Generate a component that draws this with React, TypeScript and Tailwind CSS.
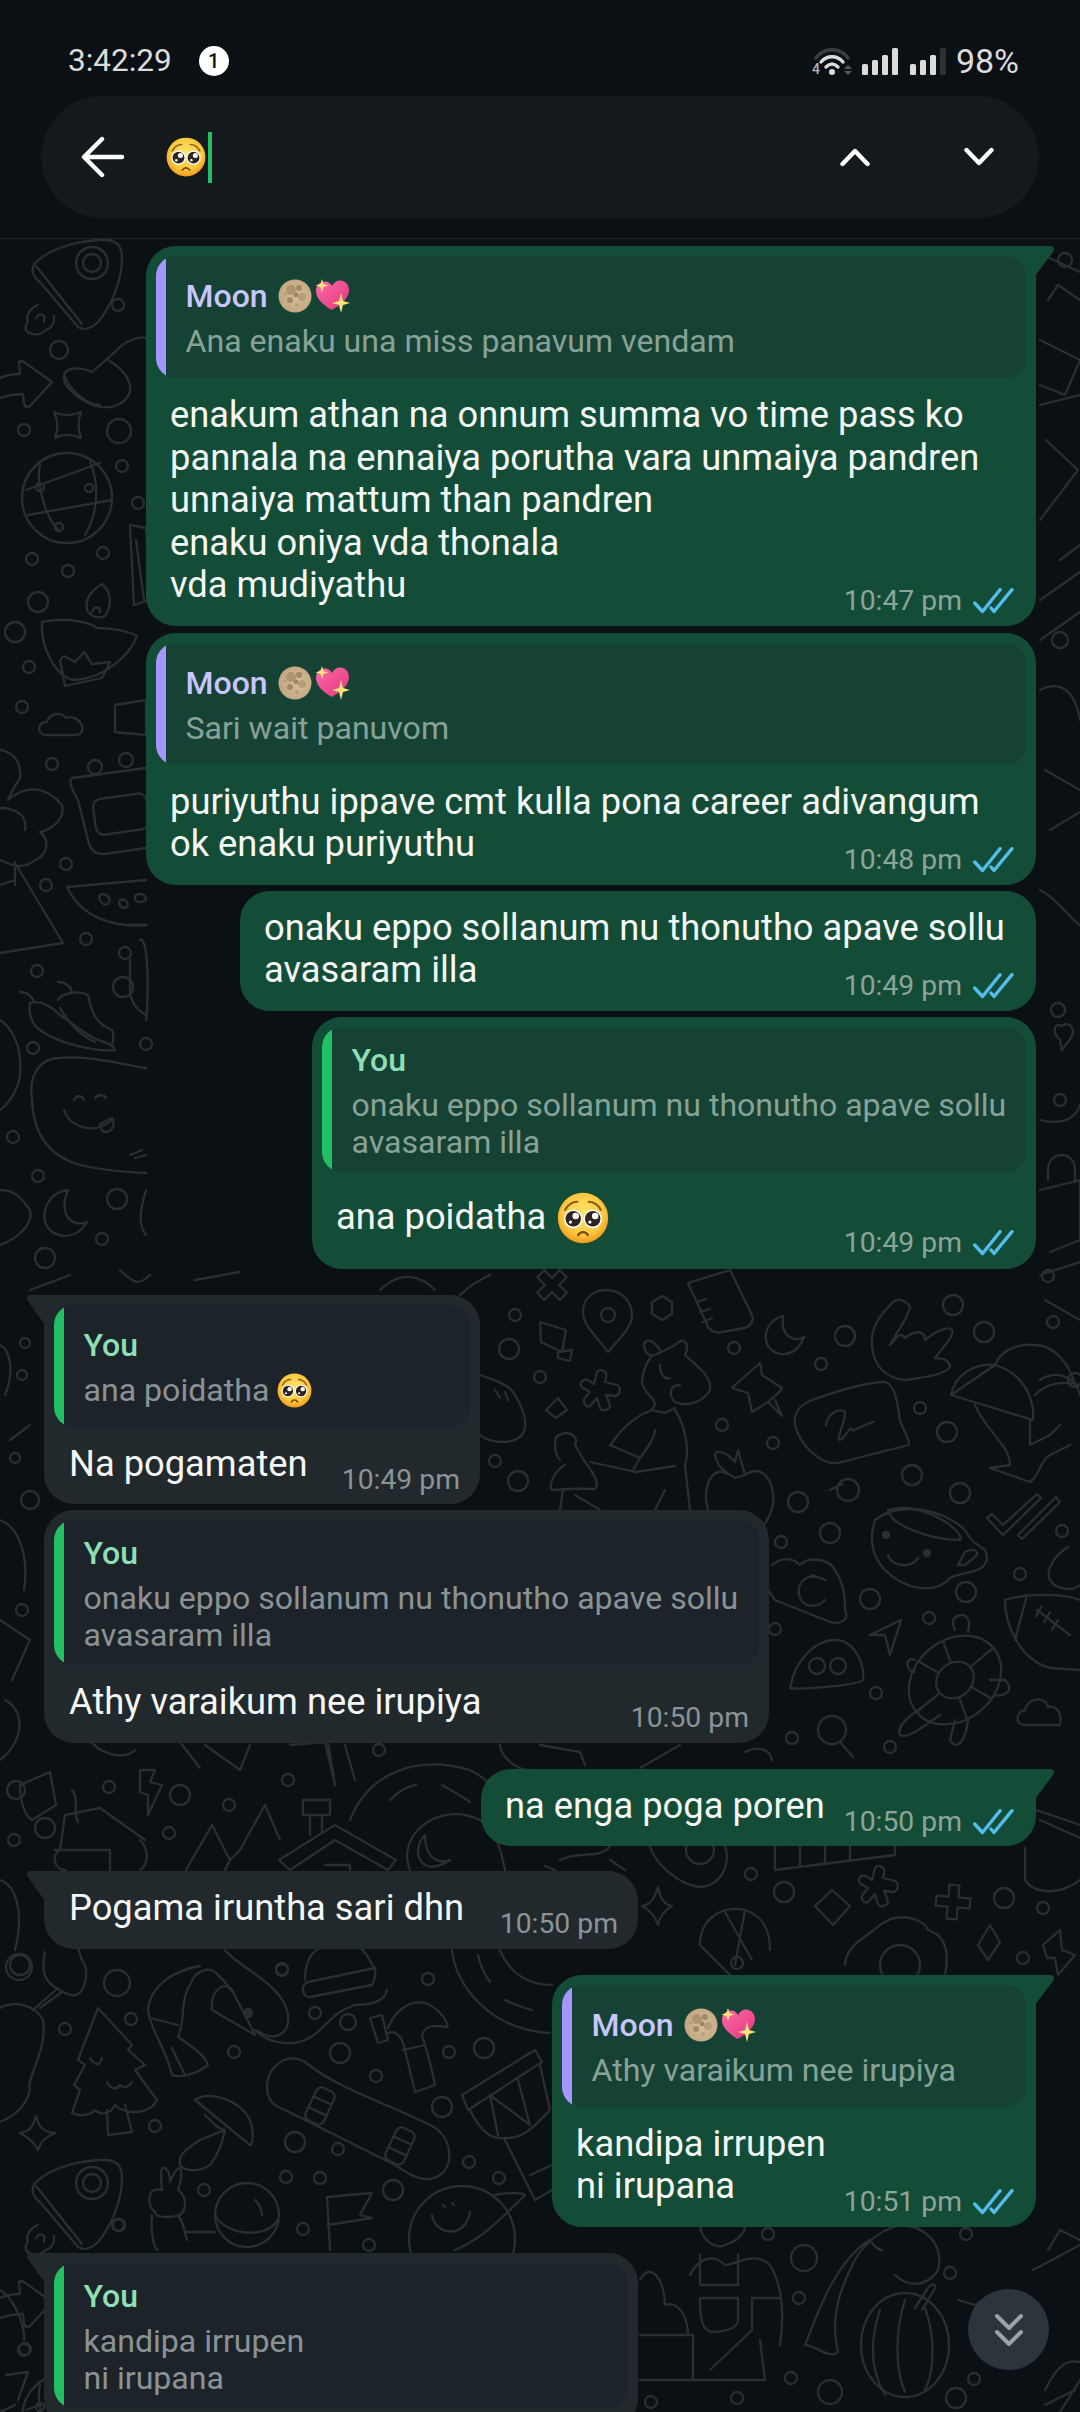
import React, { useId } from "react";

const paths: string[] = [
  "M36 262 C30 268 32 276 40 282 L78 327 C84 331 92 328 98 322 C112 305 122 280 122 258 C122 245 115 240 105 240 C85 240 55 245 36 262Z M36 266 L82 324",
  "M38 305 C30 308 25 316 28 322 C24 326 25 332 30 333 C34 336 42 334 46 330 C52 328 55 322 54 316 M36 318 C40 312 46 314 44 322",
  "M0 378 C6 375 12 374 20 374 L19 362 C19 361 22 361 24 362 L52 382 L30 406 C27 408 24 406 24 403 L23 394 C15 394 6 396 0 398",
  "M64 375 C66 368 78 366 92 372 L115 352 C125 340 140 336 146 338 M64 375 C62 385 75 398 95 406 C110 410 125 405 130 392 C132 380 122 368 108 360 M64 375 C72 395 90 405 100 405",
  "M54 412 C62 416 72 416 81 412 C78 420 78 430 81 438 C72 434 62 434 55 438 C58 430 58 420 54 412Z",
  "M26 490 L100 463 M28 515 L112 500 M40 465 C36 480 44 515 58 530 M90 462 C98 480 100 510 85 535",
  "M42 622 C70 616 92 624 97 628 C115 628 130 632 137 636 C130 655 105 678 75 680 C55 678 40 645 42 622Z",
  "M88 612 C84 604 88 592 102 584 C112 592 112 606 105 616 Q95 620 88 612Z M92 612 C94 606 100 606 100 612",
  "M60 660 L64 656 L75 662 L84 652 L92 664 L110 662 L102 678 L65 686Z",
  "M45 735 C38 735 36 722 47 722 C50 712 62 712 66 718 C72 715 80 720 82 726 C84 732 80 735 76 735Z",
  "M72 778 L146 768 M72 778 C68 782 72 790 78 800 L88 840 C90 850 95 855 105 854 L146 848",
  "M0 750 C15 752 22 765 20 778 C12 790 8 800 8 800 C25 785 45 785 62 805 C66 820 50 830 40 832 C50 840 48 855 35 860 C25 870 10 865 0 860 M0 808 C15 808 28 815 25 830 M15 862 L15 885 M0 885 L15 880",
  "M15 863 L63 943 L0 953",
  "M67 887 C80 915 110 928 146 925 M67 887 L146 880",
  "M100 895 C106 892 112 898 108 904 C102 906 98 900 100 895Z M120 900 C126 898 130 904 126 908 C120 908 118 904 120 900Z M135 896 C140 892 146 894 146 900 C140 904 134 902 135 896Z",
  "M30 1003 C40 1000 50 1005 60 1015 C75 1025 85 1035 98 1040 C104 1042 115 1045 115 1050 C100 1052 60 1045 40 1030 C32 1025 28 1012 30 1003Z M20 992 C28 992 32 996 34 1002",
  "M58 1000 C62 993 78 990 88 995 C92 1015 98 1025 112 1030 C114 1036 114 1040 112 1044 M60 1008 C70 1025 80 1035 95 1042 M72 992 C70 985 66 982 58 982",
  "M60 1058 C40 1058 28 1075 32 1100 C33 1130 45 1155 80 1165 C110 1172 130 1172 146 1173 M60 1058 C90 1055 125 1065 146 1068",
  "M64 1110 C70 1128 95 1135 112 1120 M74 1100 C76 1095 82 1095 84 1100 M95 1098 C98 1094 104 1094 106 1098 M100 1124 L112 1118 C116 1124 112 1132 106 1132 C102 1132 100 1128 100 1124Z",
  "M130 1155 L142 1150 M135 1158 L146 1155",
  "M68 1190 C50 1192 42 1208 45 1222 C50 1238 75 1243 87 1222 C72 1228 58 1215 68 1190Z",
  "M0 1020 C15 1030 22 1050 20 1075 C18 1090 8 1105 0 1110",
  "M0 1190 C12 1190 20 1195 30 1210 C34 1225 15 1240 0 1245",
  "M146 1190 C140 1210 138 1225 146 1235 M140 940 C150 935 148 1010 146 1020",
  "M128 925 L146 925 M130 960 L130 990 C130 1000 136 1010 146 1015",
  "M130 525 L146 528 L150 600 L134 605Z M136 540 L144 600",
  "M115 705 L146 700 L146 735 L115 732Z",
  "M1045 256 L1080 272 M1048 300 L1058 285 L1080 300 M1040 340 L1080 360 L1065 395 L1040 385 M1040 405 L1080 395",
  "M1046 440 L1078 470 L1040 520 M1060 560 L1080 545 M1040 600 L1080 572 M1040 640 L1080 612",
  "M1040 690 C1060 680 1075 690 1080 720 M1045 770 L1080 790 M1050 830 L1080 812 M1040 890 C1060 900 1070 920 1080 925",
  "M1060 1040 C1050 1030 1056 1022 1062 1026 C1070 1020 1078 1030 1068 1042 L1062 1050Z M1040 1120 C1060 1125 1075 1120 1080 1105",
  "M1048 1180 L1048 1170 C1048 1150 1075 1150 1075 1170 L1075 1182 M1040 1190 L1080 1180 L1080 1240 L1050 1252",
  "M1040 1275 L1080 1262 M1045 1300 L1080 1320 M1040 1380 C1055 1370 1075 1375 1080 1395",
  "M608 1352 C596 1336 583 1325 583 1312 C583 1298 594 1290 606 1290 C620 1290 632 1300 632 1315 C632 1328 618 1340 608 1352Z",
  "M662 1296 L672 1302 L672 1314 L662 1320 L652 1314 L652 1302Z",
  "M688 1283 L730 1270 L752 1315 C754 1322 750 1326 745 1328 L722 1332 C715 1334 708 1330 706 1322Z M697 1302 L706 1299 M700 1312 L710 1309 M703 1322 L712 1318",
  "M783 1316 C768 1320 762 1335 768 1346 C776 1358 796 1358 804 1337 C795 1342 780 1338 783 1316Z",
  "M893 1302 C880 1315 870 1328 872 1345 C873 1365 885 1378 905 1380 C920 1378 945 1375 950 1367 C950 1362 945 1358 935 1358 C945 1345 955 1335 952 1330 C948 1325 935 1332 925 1340 C925 1330 915 1330 905 1338 C900 1330 895 1340 890 1345 C895 1335 910 1315 910 1306 C905 1300 898 1298 893 1302Z",
  "M540 1322 L566 1330 L562 1352 L541 1342Z M558 1352 L572 1350 L570 1361 L558 1358Z M546 1410 L558 1398 L567 1410 L556 1418Z",
  "M597 1372 C600 1368 608 1370 606 1378 L605 1382 L617 1385 C622 1388 620 1396 614 1396 L606 1395 L610 1405 C610 1410 602 1412 600 1408 L597 1398 L590 1406 C585 1408 582 1402 585 1398 L590 1392 L583 1388 C578 1385 582 1378 588 1380 L594 1384Z",
  "M660 1350 C650 1335 640 1340 646 1352 C652 1360 660 1352 675 1345 C685 1335 690 1345 685 1355 C695 1365 712 1375 710 1390 C705 1400 690 1408 675 1402 C668 1395 670 1385 680 1385",
  "M652 1355 C645 1365 642 1375 642 1383 C645 1395 655 1397 655 1405 L652 1410 L665 1413 L675 1408 M660 1365 C660 1375 665 1380 670 1378",
  "M652 1410 C625 1420 615 1440 610 1445 L640 1458 C650 1445 655 1435 655 1430 M636 1472 L590 1462 M610 1445 L640 1458 L633 1470",
  "M675 1410 C685 1425 690 1450 685 1465 L690 1510 M636 1472 L675 1466 M665 1490 L655 1510",
  "M565 1465 C555 1470 548 1485 552 1490 C555 1490 570 1488 595 1489 C600 1485 595 1475 585 1462 L575 1445 C580 1435 565 1430 560 1435 C552 1435 555 1455 560 1460 M563 1490 L560 1510 M575 1495 L600 1510",
  "M480 1375 C495 1380 510 1385 515 1395 C530 1420 530 1440 505 1442 C495 1442 485 1440 480 1435 M495 1390 L500 1398 M505 1392 L508 1400",
  "M735 1385 L760 1363 L762 1375 L782 1388 C778 1395 772 1398 768 1402 L752 1412 L748 1393 L732 1388Z M768 1402 L782 1416 L775 1400",
  "M812 1400 C840 1390 870 1382 885 1382 C895 1385 897 1400 900 1420 C903 1430 910 1440 909 1445 C880 1452 850 1460 838 1463 C820 1465 800 1445 795 1425 C793 1412 800 1405 812 1400Z",
  "M826 1425 C828 1412 840 1408 845 1412 C845 1425 835 1440 840 1440 C848 1435 850 1425 852 1430 C856 1432 860 1425 873 1422",
  "M951 1395 C955 1375 975 1362 995 1365 C1000 1350 1020 1343 1035 1345 C1055 1345 1070 1365 1075 1385 L1080 1385 M995 1365 C1020 1372 1035 1395 1033 1420 L951 1395Z M1035 1395 C1045 1385 1060 1380 1080 1385",
  "M975 1405 C985 1430 1010 1445 1010 1465 L990 1468 L1030 1482 C1040 1475 1040 1460 1050 1455 L1070 1445 M1030 1420 L1030 1445 L1050 1435 L1060 1425",
  "M730 1475 C715 1465 705 1480 706 1500 C708 1515 715 1525 725 1530 M745 1475 C765 1462 775 1485 773 1505 C770 1518 762 1530 755 1535 M730 1475 L735 1478 L745 1475 L738 1450 L735 1462 C725 1450 715 1450 715 1455 C717 1468 725 1470 730 1475Z",
  "M830 1490 L842 1484",
  "M875 1520 C900 1500 945 1510 965 1530 C970 1540 975 1543 985 1550 C990 1560 985 1570 970 1572 C960 1575 955 1575 950 1578 C935 1595 905 1590 885 1570 C870 1555 870 1535 875 1520Z",
  "M888 1510 C890 1525 930 1540 960 1540 C965 1530 920 1500 888 1510Z M888 1555 C890 1565 910 1570 918 1558 M965 1552 C972 1548 980 1550 976 1556 L965 1565 L958 1565Z",
  "M987 1518 L992 1514 L1003 1525 L1037 1494 L1041 1498 L1003 1535Z M1018 1535 L1022 1539 L1060 1502 L1056 1497Z",
  "M772 1565 C785 1555 795 1560 800 1565 C810 1555 830 1560 835 1570 C845 1585 845 1600 845 1610 C850 1620 840 1625 830 1622 L775 1600 L768 1590",
  "M825 1600 C818 1608 805 1608 800 1598 C795 1585 805 1575 815 1577 M812 1575 L826 1580",
  "M1005 1600 C1020 1595 1050 1593 1070 1597 L1080 1600 M1005 1600 C1005 1625 1020 1660 1050 1668 L1080 1670 M1027 1595 L1015 1640 M1037 1610 L1070 1635 M1042 1606 L1036 1616 M1050 1612 L1044 1622 M1058 1620 L1052 1630",
  "M870 1635 L901 1620 L890 1655 L885 1635Z",
  "M790 1688 C795 1660 815 1640 835 1640 C855 1640 865 1665 863 1680 C860 1685 800 1690 790 1688Z",
  "M1025 1725 C1015 1725 1015 1712 1025 1710 C1027 1698 1045 1695 1048 1707 C1058 1705 1062 1715 1060 1725Z",
  "M840 1742 L853 1757",
  "M1068 1547 C1055 1555 1045 1570 1050 1580 C1058 1592 1075 1590 1080 1585",
  "M955 1630 C950 1620 955 1615 963 1615 C970 1617 970 1625 968 1632 M915 1660 C905 1655 905 1672 915 1672 M990 1680 L1005 1680 C1015 1690 1005 1697 995 1695 M925 1705 C915 1712 895 1725 900 1735 C908 1740 925 1725 940 1715 M955 1720 L950 1740 C955 1750 965 1745 968 1720",
  "M279 1860 L335 1825 L396 1860 L388 1870 L335 1840 L290 1870Z M325 1865 H350 V1870",
  "M303 1800 H330 V1815 H303Z M310 1815 V1835 M322 1815 V1832",
  "M186 1870 L212 1825 L230 1860 L240 1850 L265 1805 L280 1840 M230 1860 L225 1870",
  "M65 1815 L100 1808 L145 1840 M65 1815 L60 1850 M55 1850 H95 M90 1850 L110 1850 V1870 M60 1850 C50 1855 55 1870 65 1870 M140 1840 C150 1850 148 1865 140 1870",
  "M350 1820 C370 1770 420 1755 470 1770 C490 1780 495 1790 500 1795 M390 1800 C400 1790 408 1786 416 1785 M442 1785 C450 1790 460 1795 470 1802 M410 1870 C395 1835 440 1800 480 1820 C495 1830 500 1845 505 1870",
  "M425 1835 C410 1850 420 1880 450 1860 C435 1865 425 1855 425 1835Z",
  "M775 1846 L775 1870 L895 1855 L895 1846 M800 1846 V1865 M825 1846 V1862 M850 1846 V1860",
  "M650 1846 C655 1865 680 1885 700 1887 C725 1885 730 1860 725 1846",
  "M560 1860 C580 1850 600 1860 610 1846 M560 1880 L555 1870 L545 1866 M610 1860 L625 1870",
  "M658 1887 C660 1898 665 1905 672 1906 C665 1910 660 1916 658 1925 C655 1916 650 1910 642 1906 C650 1905 655 1898 658 1887Z",
  "M832 1890 L850 1906 L833 1925 L815 1906Z",
  "M875 1868 C878 1864 886 1866 884 1874 L883 1878 L895 1881 C900 1884 898 1892 892 1892 L884 1891 L888 1901 C888 1906 880 1908 878 1904 L875 1894 L868 1902 C863 1904 860 1898 863 1894 L868 1888 L861 1884 C856 1881 860 1874 866 1876 L872 1880Z",
  "M700 1945 C700 1920 720 1905 745 1910 C762 1915 770 1930 770 1950 M700 1945 L730 1975 M745 1910 L735 1965 M725 1912 L752 1960",
  "M845 1965 C845 1945 870 1935 880 1925 C900 1910 925 1920 928 1930 C945 1935 950 1950 945 1975",
  "M978 1945 L990 1925 L1000 1942 L988 1960Z",
  "M1043 1945 L1060 1930 L1062 1950 L1075 1955 L1058 1975 L1055 1958 L1047 1958Z",
  "M1025 1848 L1025 1880 C1035 1895 1060 1895 1080 1880 M1036 1810 L1080 1825 M1040 1820 L1080 1838",
  "M20 1785 L50 1772 L56 1805 L32 1820 C24 1815 20 1800 20 1785Z",
  "M140 1770 L155 1770 L150 1782 L162 1785 L148 1815 L148 1795 L140 1792Z",
  "M72 1790 C80 1800 72 1810 78 1822",
  "M90 1740 C100 1755 125 1760 135 1750 M180 1742 L200 1768 M205 1745 L240 1770 L250 1745",
  "M290 1745 L325 1742 L335 1785 L328 1742 M345 1745 L355 1780",
  "M500 1745 C500 1755 515 1770 530 1770 M540 1745 L580 1752 L585 1765",
  "M745 1752 C760 1745 770 1750 772 1760 M640 1768 L680 1745",
  "M200 1966 C175 1970 150 1985 148 2010 C150 2030 165 2045 172 2075 C180 2078 195 2075 208 2065 C205 2055 190 2045 178 2037 C185 2025 180 2000 190 1985 C195 1970 210 1965 218 1975 C230 1985 232 1995 232 1990",
  "M212 2010 C210 1990 225 1980 232 1990 L250 2025 L255 2035 L212 2010 M150 2018 L178 2025 M172 2048 L185 2075",
  "M98 2008 L78 2060 L85 2065 L74 2085 L80 2090 L72 2113 C80 2117 90 2115 95 2110 C100 2115 110 2115 115 2105 C125 2115 150 2115 157 2100 L135 2070 L145 2065 L128 2050 L132 2045Z M107 2110 L108 2135 L132 2132 L125 2105",
  "M90 2058 C95 2066 100 2066 102 2058 M107 2082 C112 2092 118 2088 120 2085 C125 2090 130 2085 132 2082",
  "M195 2100 C210 2090 240 2100 250 2120 C255 2135 252 2145 250 2145Z M205 2115 C215 2125 220 2130 225 2130 L200 2140 C185 2150 178 2155 180 2165 C185 2172 200 2172 210 2165 C218 2155 222 2145 225 2130",
  "M268 2095 C262 2070 285 2050 305 2062 C340 2090 380 2100 430 2125 C452 2135 455 2165 440 2175 C425 2185 410 2175 395 2165 L285 2110 C275 2107 270 2102 268 2095Z",
  "M370 2018 L382 2015 L388 2040 L378 2043Z M388 2028 C395 2010 410 2000 425 2003 C440 2008 450 2025 447 2027 C435 2025 425 2025 422 2035 C425 2045 430 2060 435 2085 L415 2092 L405 2050 C402 2035 395 2030 388 2033 M403 2050 L425 2045",
  "M305 1980 C305 1965 310 1952 320 1948 L360 1948 C370 1955 372 1968 375 1968 L308 1982 C300 1985 302 1997 310 1997 L372 1985 C377 1975 375 1970 375 1968",
  "M225 1950 C235 1965 285 1985 288 2015 C290 2030 280 2040 265 2035 L255 2030",
  "M255 2030 C270 2045 300 2050 320 2030 C335 2015 340 2010 355 2005 C375 2005 385 2000 387 1990",
  "M462 2095 L535 2050 L542 2062 L468 2110Z M470 2110 C480 2130 490 2140 505 2138 C525 2140 540 2120 550 2110 L540 2065 M505 2140 L535 2200 L552 2190 M490 2095 L498 2135 M518 2080 L530 2125 M490 2095 L530 2125 M530 2175 L552 2165",
  "M0 2008 C15 2000 35 2005 43 2020 C48 2050 25 2080 30 2090 C25 2110 10 2118 0 2122",
  "M33 2010 L58 1988 M40 2008 L62 1992 M45 1952 C40 1975 45 1985 70 1995 C85 1998 88 1975 85 1965 C78 1955 80 1950 78 1948",
  "M36 2116 C40 2130 45 2132 55 2133 C45 2137 40 2142 38 2150 C34 2142 28 2137 20 2133 C28 2132 33 2128 36 2116Z",
  "M452 1950 C455 1985 490 2030 550 2033 M478 1955 C480 1965 485 1975 490 1982 M505 2000 C515 2005 525 2008 532 2010 M500 1950 C510 1975 530 1985 552 1985",
  "M150 2195 C148 2205 152 2210 155 2212 C155 2218 170 2218 180 2215 C188 2208 186 2195 178 2190 C182 2180 182 2170 180 2168 C175 2168 172 2178 170 2182 C170 2170 165 2167 162 2168 C160 2175 162 2185 162 2190 C155 2188 152 2190 150 2195Z M152 2215 C150 2235 155 2250 158 2250 M178 2215 C185 2225 185 2235 187 2240",
  "M215 2215 C225 2235 265 2240 278 2220 M187 2232 H215 M255 2200 C260 2205 262 2210 262 2215",
  "M327 2197 L372 2193 L360 2215 L372 2218 L328 2225 M327 2197 L330 2250",
  "M495 2195 C510 2192 525 2193 525 2195 C500 2220 480 2240 455 2250 M432 2215 C435 2235 465 2240 470 2212 M443 2205 L445 2207 M452 2203 L454 2205",
  "M700 2226 C702 2240 715 2250 725 2245 C740 2240 745 2232 745 2226",
  "M690 2275 C700 2255 715 2255 725 2265 C735 2265 755 2250 770 2265 C782 2285 785 2310 780 2345",
  "M700 2255 V2285 H738 V2255 M700 2298 H738 V2320 C738 2330 720 2332 712 2332 C702 2330 700 2320 700 2298 M640 2335 H693 L693 2380 M640 2380 H765 L760 2340 M780 2298 H752 L752 2330 L710 2370",
  "M640 2280 C650 2260 665 2280 665 2305 C680 2300 688 2320 688 2335",
  "M805 2345 C815 2345 830 2360 838 2352 C830 2320 840 2290 850 2270 C860 2245 880 2230 900 2225 C920 2225 945 2240 938 2270 C925 2290 905 2285 895 2275 M805 2345 C815 2320 835 2260 870 2240 C875 2248 880 2250 882 2250",
  "M922 2310 L934 2290 C938 2285 932 2282 928 2288 L915 2308 M880 2310 C870 2340 870 2370 885 2395 M905 2300 C895 2330 895 2370 905 2392 M925 2308 C935 2335 935 2370 925 2390",
  "M1033 2270 L1080 2245 M1048 2250 L1060 2230 L1080 2240 M958 2300 L975 2305 L990 2296 L985 2316 L970 2330",
  "M1045 2390 C1060 2360 1070 2360 1080 2362 M1045 2405 L1075 2390 M1060 2412 L1080 2380",
  "M0 2290 C10 2295 25 2320 24 2340 M6 2375 L28 2372 L18 2400 M0 2412 L15 2405",
  "M0 1345 C10 1350 15 1370 5 1395 M10 1440 L30 1425 M0 1520 C15 1525 30 1550 24 1590 M0 1620 L30 1640 L12 1680 M5 1700 C25 1710 25 1740 0 1760 M0 1880 C15 1885 25 1910 15 1950",
  "M30 1290 L70 1275 M120 1270 C135 1285 140 1285 150 1275 M195 1280 L240 1272 M380 1290 C400 1270 420 1275 435 1290 M460 1295 C470 1285 480 1280 490 1275",
];

const circles: [number, number, number][] = [
  [32, 559, 6], [103, 553, 6], [68, 571, 6], [38, 602, 10], [15, 632, 10], [29, 667, 6], [22, 707, 6], [52, 764, 6], [66, 864, 6], [46, 885, 6], [86, 939, 6], [125, 953, 6], [37, 971, 6], [123, 987, 10], [33, 1048, 6], [146, 1044, 6], [13, 1137, 6], [38, 1176, 6], [117, 1199, 10], [102, 1239, 6], [45, 1258, 10], [138, 503, 6],
  [515, 1315, 6], [509, 1349, 10], [540, 1377, 6], [495, 1461, 6], [518, 1481, 10], [734, 1348, 6], [821, 1364, 6], [845, 1336, 10], [953, 1305, 10], [984, 1332, 10], [1053, 1322, 6], [722, 1425, 6], [773, 1443, 6], [920, 1408, 6], [947, 1432, 10], [912, 1475, 10], [960, 1493, 10], [798, 1502, 10], [830, 1533, 10], [781, 1542, 6], [1062, 1531, 6], [1020, 1574, 6], [870, 1599, 10], [966, 1592, 10], [929, 1618, 6], [775, 1629, 6], [876, 1693, 6], [792, 1738, 6], [890, 1747, 6], [608, 1315, 7], [817, 1666, 8], [838, 1666, 8], [832, 1730, 14], [848, 1490, 11], [1075, 1380, 7],
  [19, 1967, 13], [117, 1983, 13], [131, 2019, 6], [65, 2029, 6], [282, 1969, 6], [315, 2013, 6], [428, 1979, 6], [348, 2022, 8], [340, 2053, 10], [234, 2052, 6], [376, 2076, 6], [449, 2052, 6], [484, 2048, 10], [442, 2107, 10], [155, 2126, 6], [295, 2142, 10], [338, 2149, 6], [469, 2162, 6], [499, 2178, 6], [286, 2177, 6], [320, 2178, 6], [204, 2190, 6], [393, 2190, 10], [303, 2229, 6], [119, 2225, 6], [369, 2245, 6],
  [804, 2258, 13], [768, 2234, 6], [966, 2234, 6], [950, 2273, 6], [799, 2298, 6], [791, 2378, 6], [830, 2392, 12], [974, 2379, 6], [956, 2398, 10], [737, 2398, 6], [651, 2402, 6], [25, 2349, 6],
  [379, 1750, 6], [288, 1780, 6], [109, 1787, 6], [180, 1795, 10], [45, 1828, 10], [169, 1833, 6], [229, 1805, 6], [751, 1874, 6], [784, 1892, 10], [1004, 1898, 10], [1043, 1908, 6], [1023, 1958, 6], [737, 1963, 6], [282, 1970, 6], [20, 1965, 10], [700, 1850, 14], [900, 1965, 20], [247, 2215, 32], [462, 2239, 53],
  [25, 1343, 5], [22, 1375, 5], [15, 1458, 5], [30, 1500, 9], [22, 1610, 6], [16, 1790, 9], [14, 1840, 6], [1060, 640, 8], [1058, 1010, 7], [1060, 1100, 6], [1065, 260, 7], [1048, 1276, 6],
];

function RocketTop() {
  return (
    <>
      {paths.slice(0, 6).map((d, i) => (
        <path key={i} d={d} />
      ))}
      <circle cx="92" cy="263" r="16" />
      <circle cx="92" cy="263" r="9" />
      <circle cx="67" cy="498" r="45" />
      <circle cx="40" cy="487" r="4" />
      <circle cx="89" cy="488" r="4" />
      <circle cx="59" cy="527" r="4" />
      <circle cx="118" cy="305" r="6" />
      <circle cx="59" cy="350" r="9" />
      <circle cx="24" cy="430" r="6" />
      <circle cx="119" cy="431" r="12" />
      <circle cx="122" cy="466" r="6" />
    </>
  );
}

function Wallpaper() {
  return (
    <svg
      className="absolute inset-0"
      width="1080"
      height="2412"
      viewBox="0 0 1080 2412"
      fill="none"
      stroke="#2a2e32"
      strokeWidth="2.3"
      strokeLinecap="round"
      strokeLinejoin="round"
    >
      {paths.slice(6).map((d, i) => (
        <path key={i} d={d} />
      ))}
      {circles.map(([x, y, r], i) => (
        <circle key={i} cx={x} cy={y} r={r} />
      ))}
      <RocketTop />
      <g transform="translate(0 1920)">
        <RocketTop />
      </g>
      <circle cx="886" cy="1535" r="3" fill="#2a2e32" />
      <circle cx="927" cy="1553" r="3" fill="#2a2e32" />
      <circle cx="248" cy="2013" r="4" fill="#2a2e32" />
      <g transform="translate(552 1285) rotate(45)">
        <path d="M-5 -16 H5 V-5 H16 V5 H5 V16 H-5 V5 H-16 V-5 H-5Z" />
      </g>
      <g transform="translate(953 1902) rotate(5)">
        <path d="M-5 -17 H5 V-5 H17 V5 H5 V17 H-5 V5 H-17 V-5 H-5Z" />
      </g>
      <g transform="translate(955 1680) rotate(-40)">
        <ellipse rx="50" ry="40" />
        <ellipse rx="20" ry="17" />
        <path d="M-20 0 H-50 M20 0 H50 M-8 -16 L-16 -38 M8 -16 L16 -38 M-8 16 L-16 38 M8 16 L16 38" />
      </g>
      <g transform="translate(320 2106) rotate(25)">
        <rect x="-10" y="-18" width="20" height="36" rx="6" />
        <path d="M-10 -6 H10 M-10 6 H10" />
      </g>
      <g transform="translate(400 2146) rotate(25)">
        <rect x="-10" y="-18" width="20" height="36" rx="6" />
        <path d="M-10 -6 H10 M-10 6 H10" />
      </g>
      <g transform="translate(905 2345)">
        <ellipse rx="44" ry="52" />
      </g>
      <circle cx="95" cy="767" r="7" />
      <circle cx="126" cy="760" r="7" />
      <rect x="92" y="800" width="54" height="36" rx="8" transform="rotate(-8 92 800)" />
    </svg>
  );
}

function Pleading({ size }: { size: number }) {
  const id = useId();
  return (
    <svg width={size} height={size} viewBox="0 0 64 64" className="inline-block shrink-0">
      <defs>
        <radialGradient id={id} cx="50%" cy="42%" r="58%">
          <stop offset="0%" stopColor="#fde66e" />
          <stop offset="70%" stopColor="#fbc93e" />
          <stop offset="100%" stopColor="#f39a1f" />
        </radialGradient>
      </defs>
      <circle cx="32" cy="32" r="31" fill={`url(#${id})`} />
      <path d="M10 22 C14 15 20 12 25 12 M54 22 C50 15 44 12 39 12" stroke="#8a5a1a" strokeWidth="2.6" fill="none" strokeLinecap="round" />
      <circle cx="20" cy="33" r="11.5" fill="#fff" />
      <circle cx="44" cy="33" r="11.5" fill="#fff" />
      <circle cx="20" cy="33" r="9.5" fill="#2e241f" />
      <circle cx="44" cy="33" r="9.5" fill="#2e241f" />
      <circle cx="23" cy="29.5" r="4" fill="#fff" />
      <circle cx="47" cy="29.5" r="4" fill="#fff" />
      <circle cx="16.5" cy="37" r="2" fill="#fff" />
      <circle cx="40.5" cy="37" r="2" fill="#fff" />
      <path d="M26 53 C29 48 35 48 38 53" stroke="#7a4a16" strokeWidth="2.8" fill="none" strokeLinecap="round" />
    </svg>
  );
}

function MoonEmoji() {
  const id = useId();
  return (
    <svg width="34" height="34" viewBox="0 0 34 34" className="shrink-0">
      <defs>
        <radialGradient id={id} cx="55%" cy="50%" r="55%">
          <stop offset="0%" stopColor="#d9c19c" />
          <stop offset="100%" stopColor="#c2a67f" />
        </radialGradient>
      </defs>
      <circle cx="17" cy="17" r="16.5" fill={`url(#${id})`} />
      <circle cx="13" cy="11" r="5" fill="#ad9572" />
      <circle cx="21" cy="9" r="3" fill="#a08a6a" />
      <circle cx="24" cy="18" r="4" fill="#b59d7a" />
      <circle cx="12" cy="21" r="3" fill="#a08a6a" />
      <circle cx="18" cy="16" r="2.4" fill="#9c8566" />
      <circle cx="19" cy="26" r="2" fill="#b89f7c" />
      <circle cx="7" cy="15" r="1.8" fill="#b89f7c" />
    </svg>
  );
}

function HeartEmoji() {
  const id = useId();
  return (
    <svg width="35" height="34" viewBox="0 0 35 34" className="shrink-0">
      <defs>
        <linearGradient id={id} x1="0" y1="0" x2="1" y2="1">
          <stop offset="0%" stopColor="#f96ca6" />
          <stop offset="100%" stopColor="#e5357e" />
        </linearGradient>
      </defs>
      <path d="M16.5 31 C7 25 1 19 1 12 C1 6 5.5 2.5 10 2.5 C13 2.5 15.5 4 17 7 C18.5 4 21 1.5 25 1.5 C30 1.5 34 5.5 34 11 C34 19 26 26 16.5 31Z" fill={`url(#${id})`} />
      <path d="M7 0 L8.6 5 L13.5 6.5 L8.6 8 L7 13 L5.4 8 L0.5 6.5 L5.4 5Z" fill="#ffe27a" />
      <path d="M26 14 L28 22 L35 24 L28 26 L26 34 L24 26 L17 24 L24 22Z" fill="#ffe27a" />
    </svg>
  );
}

function Ticks() {
  return (
    <svg width="41" height="26" viewBox="0 0 41 26" fill="none" stroke="#53bdeb" strokeWidth="3.4" strokeLinecap="round" strokeLinejoin="round" className="shrink-0">
      <path d="M1.7 15 L9.5 23.5 L27 1.7" />
      <path d="M18 20 L21 23.5 L39 1.7" />
    </svg>
  );
}

function Time({ value, sent, low }: { value: string; sent: boolean; low?: boolean }) {
  return (
    <div className={`flex shrink-0 items-center gap-[11px] ${low ? "translate-y-[20px] self-end" : "translate-y-[16px] self-start"}`}>
      <span className={sent ? "text-[28.3px] leading-[42px] text-[#8da49b]" : "text-[28.3px] leading-[42px] text-[#8b9397]"}>{value}</span>
      {sent && <Ticks />}
    </div>
  );
}

type Reply = { who: "Moon" | "You"; lines: string[]; emoji?: boolean };

function ReplyBox({ reply, sent }: { reply: Reply; sent: boolean }) {
  const moon = reply.who === "Moon";
  return (
    <div className={`flex min-h-[122px] overflow-hidden rounded-[20px] ${sent ? "bg-[#154235]" : "bg-[#1d2429]"}`}>
      <div className={`w-[10px] shrink-0 ${moon ? "bg-[#a596ff]" : "bg-[#21c063]"}`} />
      <div className="flex flex-col justify-center pb-[11px] pl-[19.5px] pt-[13px]">
        <div className={`flex h-[40px] items-center gap-[10px] text-[32px] font-medium ${moon ? "text-[#c9c5ff]" : "text-[#8fdfb4]"}`}>
          {reply.who}
          {moon && (
            <span className="flex items-center gap-[3px]">
              <MoonEmoji />
              <HeartEmoji />
            </span>
          )}
        </div>
        <div className={`mt-[7px] text-[32.1px] leading-[37px] ${sent ? "text-[#88a297]" : "text-[#8b9296]"}`}>
          {reply.lines.map((l, i) => (
            <div key={l} className="flex items-center gap-[8px]">
              {l}
              {reply.emoji && i === 0 && <Pleading size={35} />}
            </div>
          ))}
        </div>
      </div>
    </div>
  );
}

type Msg = {
  sent: boolean;
  cls: string;
  tail?: boolean;
  reply?: Reply;
  lines: string[];
  time?: string;
  emoji?: boolean;
};

function Bubble({ m }: { m: Msg }) {
  const shape = m.sent
    ? `self-end mr-[44px] bg-[#144d37] ${m.tail ? "rounded-[30px] rounded-tr-none" : "rounded-[30px]"}`
    : `self-start ml-[44px] bg-[#22292c] ${m.tail ? "rounded-[30px] rounded-tl-none" : "rounded-[30px]"}`;
  const last = m.lines[m.lines.length - 1];
  const pad = m.emoji
    ? "pb-[25px] pl-[24px] pr-[22px] pt-[20px]"
    : m.sent
      ? "pb-[19px] pl-[24px] pr-[22px] pt-[16px]"
      : "pb-[19px] pl-[25px] pr-[20px] pt-[16px]";
  return (
    <div className={`relative flex shrink-0 flex-col ${shape} ${m.cls}`}>
      {m.tail &&
        (m.sent ? (
          <svg className="absolute -right-[19px] top-0" width="20" height="30" viewBox="0 0 20 30" fill="#144d37">
            <path d="M0 0 H15 C19 0 20 3 18 6 L0 30Z" />
          </svg>
        ) : (
          <svg className="absolute -left-[17px] top-0" width="18" height="30" viewBox="0 0 18 30" fill="#22292c">
            <path d="M18 0 H4 C0 0 -1 3 1 6 L18 30Z" />
          </svg>
        ))}
      {m.reply && (
        <div className="mx-[10px] mt-[10px]">
          <ReplyBox reply={m.reply} sent={m.sent} />
        </div>
      )}
      {m.lines.length > 0 && (
        <div className={pad}>
          <div className="text-[36.3px] leading-[42.5px] text-[#f5f7f6]">
            {m.lines.slice(0, -1).map((l) => (
              <div key={l}>{l}</div>
            ))}
            <div className="flex justify-between">
              <span className="flex items-center gap-[11px]">
                {last}
                {m.emoji && <Pleading size={52} />}
              </span>
              {m.time && <Time value={m.time} sent={m.sent} low={m.emoji} />}
            </div>
          </div>
        </div>
      )}
      {m.lines.length === 0 && <div className="h-[20px]" />}
    </div>
  );
}

const messages: Msg[] = [
  {
    sent: true,
    tail: true,
    cls: "w-[890px]",
    reply: { who: "Moon", lines: ["Ana enaku una miss panavum vendam"] },
    lines: [
      "enakum athan na onnum summa vo time pass ko",
      "pannala na ennaiya porutha vara unmaiya pandren",
      "unnaiya mattum than pandren",
      "enaku oniya vda thonala",
      "vda mudiyathu",
    ],
    time: "10:47 pm",
  },
  {
    sent: true,
    cls: "w-[890px] mt-[7px]",
    reply: { who: "Moon", lines: ["Sari wait panuvom"] },
    lines: ["puriyuthu ippave cmt kulla pona career adivangum", "ok enaku puriyuthu"],
    time: "10:48 pm",
  },
  {
    sent: true,
    cls: "w-[796px] mt-[6px]",
    lines: ["onaku eppo sollanum nu thonutho apave sollu", "avasaram illa"],
    time: "10:49 pm",
  },
  {
    sent: true,
    emoji: true,
    cls: "w-[724px] mt-[6px]",
    reply: { who: "You", lines: ["onaku eppo sollanum nu thonutho apave sollu", "avasaram illa"] },
    lines: ["ana poidatha"],
    time: "10:49 pm",
  },
  {
    sent: false,
    tail: true,
    cls: "w-[436px] mt-[26px]",
    reply: { who: "You", lines: ["ana poidatha"], emoji: true },
    lines: ["Na pogamaten"],
    time: "10:49 pm",
  },
  {
    sent: false,
    cls: "w-[725px] mt-[6px]",
    reply: { who: "You", lines: ["onaku eppo sollanum nu thonutho apave sollu", "avasaram illa"] },
    lines: ["Athy varaikum nee irupiya"],
    time: "10:50 pm",
  },
  { sent: true, tail: true, cls: "w-[555px] mt-[26px]", lines: ["na enga poga poren"], time: "10:50 pm" },
  { sent: false, tail: true, cls: "w-[594px] mt-[25px]", lines: ["Pogama iruntha sari dhn"], time: "10:50 pm" },
  {
    sent: true,
    tail: true,
    cls: "w-[484px] mt-[26px]",
    reply: { who: "Moon", lines: ["Athy varaikum nee irupiya"] },
    lines: ["kandipa irrupen", "ni irupana"],
    time: "10:51 pm",
  },
  {
    sent: false,
    tail: true,
    cls: "w-[594px] mt-[26px]",
    reply: { who: "You", lines: ["kandipa irrupen", "ni irupana"] },
    lines: [],
  },
];

function Bars({ last }: { last: string }) {
  return (
    <svg width="36" height="27" viewBox="0 0 36 27">
      <rect x="0" y="16" width="6" height="11" rx="1.5" fill="#dcdcdc" />
      <rect x="10" y="12" width="6" height="15" rx="1.5" fill="#dcdcdc" />
      <rect x="20" y="7" width="6" height="20" rx="1.5" fill="#dcdcdc" />
      <rect x="30" y="0" width="6" height="27" rx="1.5" fill={last} />
    </svg>
  );
}

function StatusIcons() {
  return (
    <div className="flex items-center">
      <span className="mr-[-8px] mt-[15px] text-[14px] font-medium leading-[14px] text-[#b5b5b5]">4</span>
      <svg width="42" height="32" viewBox="0 0 42 32" fill="none" className="mr-[8px]">
        <path d="M4 13 C12 2 28 2 36 13" stroke="#3a3e41" strokeWidth="3.4" strokeLinecap="round" />
        <path d="M9 17 C15 10 25 10 31 17" stroke="#dcdcdc" strokeWidth="3.4" strokeLinecap="round" />
        <path d="M14 22 C18 18 22 18 26 22" stroke="#dcdcdc" strokeWidth="3.4" strokeLinecap="round" />
        <circle cx="20" cy="27" r="3" fill="#dcdcdc" />
        <path d="M36 20 L40 24 H32Z" fill="#55585b" />
        <path d="M32 26 H40 L36 30Z" fill="#55585b" />
      </svg>
      <Bars last="#dcdcdc" />
      <div className="w-[12px]" />
      <Bars last="#2d3134" />
    </div>
  );
}

export default function App() {
  return (
    <div className="relative h-[2412px] w-[1080px] overflow-hidden bg-[#0b1014] font-['Roboto',sans-serif]">
      <Wallpaper />
      <header className="relative z-10 h-[239px] border-b border-[#23282b] bg-[#0b1014]">
        <div className="flex h-[96px] items-start justify-between pl-[68px] pr-[61px] pt-[43px]">
          <div className="flex items-center gap-[27px]">
            <span className="text-[31.5px] leading-[36px] text-[#dcdcdc]">3:42:29</span>
            <span className="flex h-[30px] w-[30px] items-center justify-center rounded-full bg-white text-[20px] font-medium text-[#111]">1</span>
          </div>
          <div className="flex items-center gap-[10px]">
            <StatusIcons />
            <span className="text-[34px] leading-[36px] text-[#dcdcdc]">98%</span>
          </div>
        </div>
        <div className="mx-[41px] flex h-[122px] items-center rounded-full bg-[#14191c] pl-[40px] pr-[45px]">
          <svg width="44" height="42" viewBox="0 0 44 42" fill="none" stroke="#ffffff" strokeWidth="4.4" strokeLinecap="round" strokeLinejoin="round">
            <path d="M41 21 H4 M21 3 L3 21 L21 39" />
          </svg>
          <div className="ml-[41px] flex items-center">
            <Pleading size={40} />
            <div className="ml-[2px] h-[51px] w-[4px] bg-[#21c063]" />
          </div>
          <div className="ml-auto flex items-center gap-[94px]">
            <svg width="30" height="20" viewBox="0 0 30 20" fill="none" stroke="#fff" strokeWidth="4.4" strokeLinecap="round" strokeLinejoin="round">
              <path d="M2.5 17 L15 4 L27.5 17" />
            </svg>
            <svg width="30" height="20" viewBox="0 0 30 20" fill="none" stroke="#fff" strokeWidth="4.4" strokeLinecap="round" strokeLinejoin="round">
              <path d="M2.5 3 L15 16 L27.5 3" />
            </svg>
          </div>
        </div>
      </header>
      <main className="relative flex flex-col pt-[7px]">
        {messages.map((m, i) => (
          <Bubble key={i} m={m} />
        ))}
      </main>
      <div className="absolute left-[968px] top-[2289px] flex h-[81px] w-[81px] items-center justify-center rounded-full bg-[#2c3539]">
        <svg width="30" height="34" viewBox="0 0 30 34" fill="none" stroke="#9aa4a7" strokeWidth="4" strokeLinecap="round" strokeLinejoin="round">
          <path d="M3 3 L15 15 L27 3 M3 19 L15 31 L27 19" />
        </svg>
      </div>
    </div>
  );
}
